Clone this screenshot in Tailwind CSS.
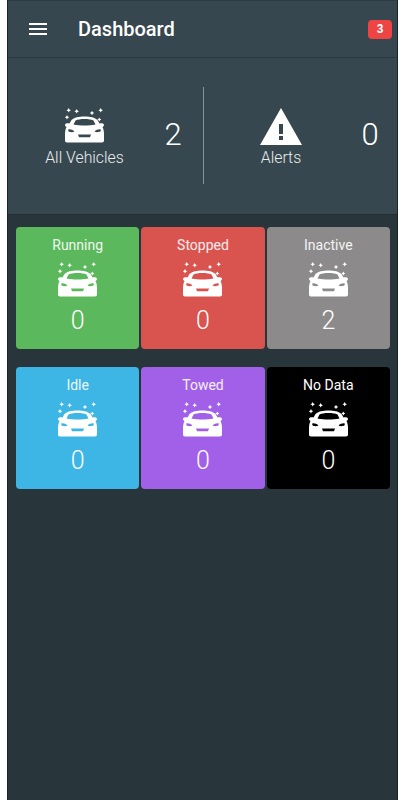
<!DOCTYPE html>
<html lang="en">
<head>
    <meta charset="UTF-8">
    <meta name="viewport" content="width=device-width, initial-scale=1.0">
    <title>Dashboard</title>
    <script src="https://cdn.jsdelivr.net/npm/@tailwindcss/browser@4"></script>
</head>
<body class="bg-white font-['Roboto',sans-serif]">
    <svg class="hidden">
        <symbol id="car" viewBox="0 0 39 35">
            <path fill-rule="evenodd" d="M6.500 12C9 9.500 14 8.500 19.500 8.500S30 9.500 32.500 12L34.500 15.500C35.500 15 38.500 15 39 16.800 39 18.300 38 18.800 37.500 19 38.500 21 39 23.500 39 26V32.500C39 33.500 38.300 34.500 37 34.500H2C.7 34.500 0 33.500 0 32.500V26C0 23.500 .5 21 1.500 19 1 18.800 0 18.300 0 16.800 .5 15 3.500 15 4.500 15.500ZM10.500 12.500C12.500 11.500 15.500 11 19.500 11S26.500 11.500 28.500 12.500L30.500 16.500C27 17.300 23 17.500 19.500 17.500S12 17.300 8.500 16.500ZM3.300 21.500C5 21 8 22 9.500 23.500 8 24.500 4.500 24.300 3.300 23.300ZM35.700 21.500C34 21 31 22 29.500 23.500 31 24.500 34.500 24.300 35.700 23.300ZM13 26.500H26L25 29.300H14Z"/>
            <path d="M3.700 0l.8 1.500L6 2.300l-1.500.8-.8 1.500-.8-1.500L1.400 2.300l1.500-.8ZM11.700 1l.8 1.500 1.500.8-1.500.8-.8 1.500-.8-1.500-1.500-.8 1.500-.8ZM27 2.700l.8 1.500 1.500.8-1.500.8-.8 1.500-.8-1.500-1.500-.8 1.500-.8ZM35.700 0l.8 1.500 1.500.8-1.500.8-.8 1.500-.8-1.500-1.500-.8 1.500-.8ZM2 7l.8 1.500 1.500.8-1.500.8-.8 1.500-.8-1.500L-.3 9.300l1.500-.8ZM34.300 9.500l.7 1.300 1.300.7-1.300.7-.7 1.300-.7-1.300-1.300-.7 1.300-.7Z"/>
        </symbol>
    </svg>

    <main class="mx-[7px] w-[391px] h-[800px] bg-[#28363c] border-x border-[#1c2429] flex flex-col text-white">
        <header class="h-[58px] bg-[#37474f] border-t border-b border-[#2c3a41] flex items-center pl-[21px] pr-[5px]">
            <div class="w-[18px] flex flex-col gap-[3px]">
                <span class="h-[2px] bg-white"></span>
                <span class="h-[2px] bg-white"></span>
                <span class="h-[2px] bg-white"></span>
            </div>
            <h1 class="ml-[31px] text-[20px] leading-none font-medium">Dashboard</h1>
            <span class="ml-auto w-[24px] h-[19px] rounded-[4px] bg-[#ef4444] flex items-center justify-center text-[12px] font-bold font-['Liberation_Sans',sans-serif]">3</span>
        </header>

        <section class="h-[157px] bg-[#37474f] border-b border-[#242f35] flex items-center">
            <div class="w-[195px] flex items-center">
                <div class="w-[153px] flex flex-col items-center pt-[2px]">
                    <svg class="w-[39px] h-[35px] fill-white"><use href="#car"/></svg>
                    <span class="mt-[5px] text-[15.800px] leading-[19px] font-light text-white/90">All Vehicles</span>
                </div>
                <span class="w-6 mb-[4px] text-center text-[31px] leading-none font-light">2</span>
            </div>
            <div class="w-px h-[97px] mb-[2px] bg-white/40"></div>
            <div class="flex-1 flex items-center">
                <div class="w-[154px] flex flex-col items-center pt-[2px]">
                    <svg class="w-[42px] h-[37px] fill-white" viewBox="0 0 42 37">
                        <path fill-rule="evenodd" d="M21 0 42 37H0ZM19 16v10h4V16ZM19 28v4h4v-4Z"/>
                    </svg>
                    <span class="mt-[3px] text-[15.800px] leading-[19px] font-light text-white/90">Alerts</span>
                </div>
                <span class="w-6 mb-[4px] text-center text-[31px] leading-none font-light">0</span>
            </div>
        </section>

        <section class="pt-[12px] pl-[8px] pr-[7px] grid grid-cols-3 gap-x-[2px] gap-y-[18px]">
            <div class="h-[122px] rounded-[4px] bg-[#5cb85c] flex flex-col items-center pt-[10px]">
                <span class="text-[14px] leading-[17px] text-white/90">Running</span>
                <svg class="mt-[8px] w-[39px] h-[35px] fill-white"><use href="#car"/></svg>
                <span class="mt-[9px] text-[25px] leading-[29px] font-light">0</span>
            </div>
            <div class="h-[122px] rounded-[4px] bg-[#d9534f] flex flex-col items-center pt-[10px]">
                <span class="text-[14px] leading-[17px] text-white/90">Stopped</span>
                <svg class="mt-[8px] w-[39px] h-[35px] fill-white"><use href="#car"/></svg>
                <span class="mt-[9px] text-[25px] leading-[29px] font-light">0</span>
            </div>
            <div class="h-[122px] rounded-[4px] bg-[#8c8a8a] flex flex-col items-center pt-[10px]">
                <span class="text-[14px] leading-[17px] text-white/90">Inactive</span>
                <svg class="mt-[8px] w-[39px] h-[35px] fill-white"><use href="#car"/></svg>
                <span class="mt-[9px] text-[25px] leading-[29px] font-light">2</span>
            </div>
            <div class="h-[122px] rounded-[4px] bg-[#3db5e5] flex flex-col items-center pt-[10px]">
                <span class="text-[14px] leading-[17px] text-white/90">Idle</span>
                <svg class="mt-[8px] w-[39px] h-[35px] fill-white"><use href="#car"/></svg>
                <span class="mt-[9px] text-[25px] leading-[29px] font-light">0</span>
            </div>
            <div class="h-[122px] rounded-[4px] bg-[#a260e8] flex flex-col items-center pt-[10px]">
                <span class="text-[14px] leading-[17px] text-white/90">Towed</span>
                <svg class="mt-[8px] w-[39px] h-[35px] fill-white"><use href="#car"/></svg>
                <span class="mt-[9px] text-[25px] leading-[29px] font-light">0</span>
            </div>
            <div class="h-[122px] rounded-[4px] bg-black flex flex-col items-center pt-[10px]">
                <span class="text-[14px] leading-[17px]">No Data</span>
                <svg class="mt-[8px] w-[39px] h-[35px] fill-white"><use href="#car"/></svg>
                <span class="mt-[9px] text-[25px] leading-[29px] font-light">0</span>
            </div>
        </section>
    </main>
</body>
</html>
